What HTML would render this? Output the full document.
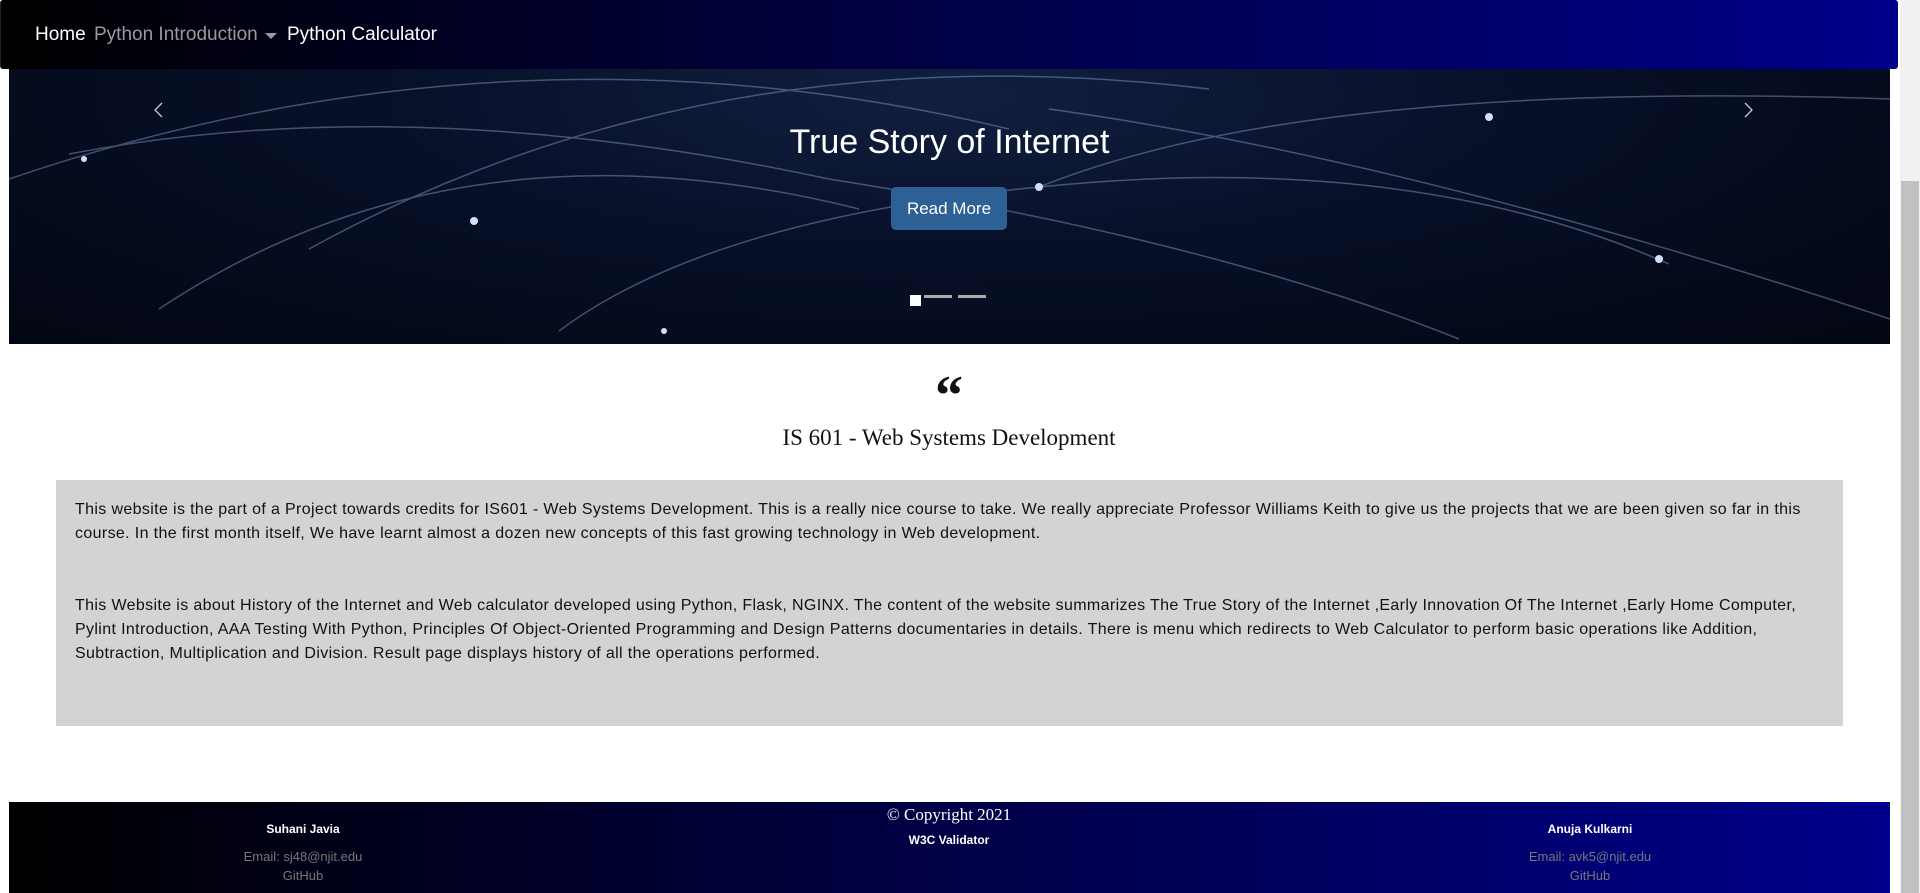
<!DOCTYPE html>
<html><head><meta charset="utf-8"><style>
*{margin:0;padding:0;box-sizing:border-box}
html,body{width:1920px;height:893px;overflow:hidden;background:#fff;font-family:"Liberation Sans",Arial,sans-serif}
.nav{position:absolute;left:0;top:0;width:1898px;height:69px;background:linear-gradient(90deg,#000 0%,#00002a 30%,#00008b 100%);border-radius:3px;border-left:1px solid #223}
.nav span{position:absolute;top:24px;font-size:19px;color:#fff}
.hero{position:absolute;left:9px;top:69px;width:1881px;height:275px;overflow:hidden;background:radial-gradient(ellipse at 50% 10%,#121f40 0%,#08112a 40%,#030612 100%)}
.hero h1{position:absolute;left:0;width:100%;text-align:center;font-weight:normal;font-size:34px;color:#fff;top:54px}
.btn{position:absolute;left:882px;top:118px;width:116px;height:43px;background:#2d6195;border-radius:5px;color:#fff;font-size:17px;text-align:center;line-height:43px}
.scroll{position:absolute;left:1900px;top:0;width:20px;height:893px;background:#f1f1f1}
.thumb{position:absolute;left:1901px;top:181px;width:18px;height:712px;background:#c1c1c1}
.quote{position:absolute;left:0;width:1898px;text-align:center;top:368px;font-family:"Liberation Serif",serif;font-weight:bold;font-size:56px;line-height:56px;color:#111}
.h2{position:absolute;left:0;width:1898px;text-align:center;top:425px;font-family:"Liberation Serif",serif;font-size:23px;color:#111}
.box{position:absolute;left:56px;top:480px;width:1787px;height:246px;background:#d3d3d3;padding:18px 19px;font-size:16px;letter-spacing:0.36px;line-height:24px;color:#111}
.box p{margin-bottom:48px}
.foot{position:absolute;left:9px;top:802px;width:1881px;height:91px;background:linear-gradient(90deg,#000 0%,#00008b 100%);color:#fff;text-align:center}
.col{position:absolute;width:300px;font-size:12px}
.col b{display:block;margin-bottom:11px}
.col .g{color:#777;font-size:13px;line-height:19px}
</style></head><body>
<div class="nav">
<span style="left:34px">Home</span>
<span style="left:93px;color:#9a9a9a">Python Introduction</span>
<span style="left:264px;top:33px;width:0;height:0;border-left:6px solid transparent;border-right:6px solid transparent;border-top:6px solid #9a9a9a"></span>
<span style="left:286px">Python Calculator</span>
</div>
<div class="hero">
<svg width="1881" height="275" style="position:absolute;left:0;top:0">
<g fill="none" stroke="#8aa3d0" stroke-width="1.5" opacity="0.45">
<path d="M0 110 Q500 -60 1000 60"/>
<path d="M60 85 Q400 20 820 110 Q1200 170 1450 270"/>
<path d="M150 240 Q450 40 850 140"/>
<path d="M550 262 Q700 150 1030 118 Q1400 80 1660 195"/>
<path d="M1030 118 Q1300 10 1881 30"/>
<path d="M1040 40 Q1400 90 1881 250"/>
<path d="M300 180 Q700 -40 1200 20"/>
</g>
<g fill="#cfe0ff"><circle cx="465" cy="152" r="4"/><circle cx="1030" cy="118" r="4"/><circle cx="1650" cy="190" r="4"/><circle cx="1480" cy="48" r="4"/><circle cx="75" cy="90" r="3"/><circle cx="655" cy="262" r="3"/></g>
<path d="M153 34 L146 41 L153 48" fill="none" stroke="#ccc" stroke-width="1.3"/>
<path d="M1736 34 L1743 41 L1736 48" fill="none" stroke="#ccc" stroke-width="1.3"/>
<rect x="901" y="226" width="11" height="11" fill="#fff"/>
<rect x="915" y="226" width="28" height="3" fill="#aaa"/>
<rect x="949" y="226" width="28" height="3" fill="#aaa"/>
</svg>
<h1>True Story of Internet</h1>
<div class="btn">Read More</div>
</div>
<div class="quote">&#8220;</div>
<div class="h2">IS 601 - Web Systems Development</div>
<div class="box">
<p>This website is the part of a Project towards credits for IS601 - Web Systems Development. This is a really nice course to take. We really appreciate Professor Williams Keith to give us the projects that we are been given so far in this course. In the first month itself, We have learnt almost a dozen new concepts of this fast growing technology in Web development.</p>
<p>This Website is about History of the Internet and Web calculator developed using Python, Flask, NGINX. The content of the website summarizes The True Story of the Internet ,Early Innovation Of The Internet ,Early Home Computer, Pylint Introduction, AAA Testing With Python, Principles Of Object-Oriented Programming and Design Patterns documentaries in details. There is menu which redirects to Web Calculator to perform basic operations like Addition, Subtraction, Multiplication and Division. Result page displays history of all the operations performed.</p>
</div>
<div class="foot">
<div class="col" style="left:144px;top:20px"><b>Suhani Javia</b><div class="g">Email: sj48@njit.edu<br>GitHub</div></div>
<div class="col" style="left:790px;top:3px"><div style="font-family:'Liberation Serif',serif;font-size:17px;margin-bottom:8px">© Copyright 2021</div><b>W3C Validator</b></div>
<div class="col" style="left:1431px;top:20px"><b>Anuja Kulkarni</b><div class="g">Email: avk5@njit.edu<br>GitHub</div></div>
</div>
<div class="scroll"></div><div class="thumb"></div>
</body></html>
